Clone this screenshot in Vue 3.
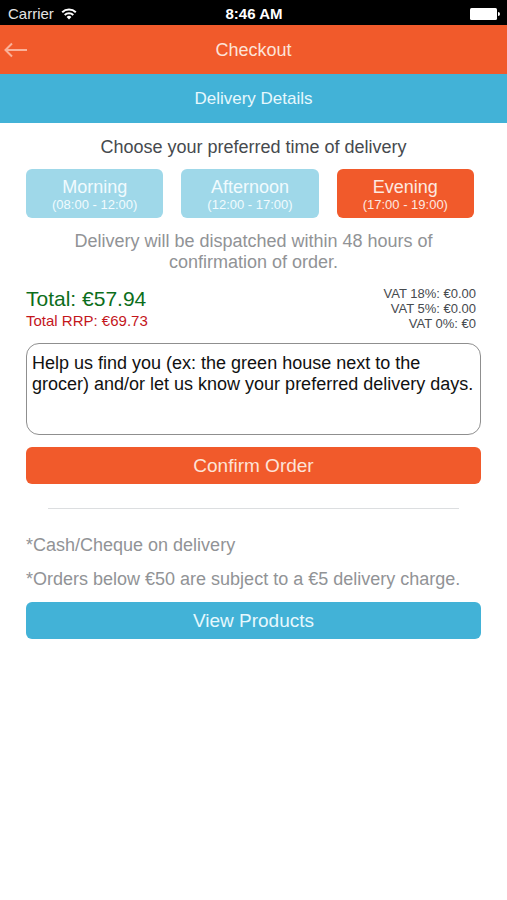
<script setup>
import { ref } from 'vue'

const slots = [
  { name: 'Morning', hours: '(08:00 - 12:00)' },
  { name: 'Afternoon', hours: '(12:00 - 17:00)' },
  { name: 'Evening', hours: '(17:00 - 19:00)' },
]
const selected = ref('Evening')
const vat = ['VAT 18%: €0.00', 'VAT 5%: €0.00', 'VAT 0%: €0']
const notes = ref(
  'Help us find you (ex: the green house next to the grocer) and/or let us know your preferred delivery days.'
)
</script>

<template>
  <div class="screen">
    <div class="status">
      <div class="carrier">
        <span>Carrier</span>
        <svg class="wifi" width="16" height="12" viewBox="0 0 16 12" aria-hidden="true">
          <path d="M1.2 4.3a9.8 9.8 0 0 1 13.6 0" />
          <path d="M3.7 7a6.2 6.2 0 0 1 8.6 0" />
          <path class="dot" d="M8 11.5 5.6 9a3.4 3.4 0 0 1 4.8 0z" />
        </svg>
      </div>
      <span class="clock">8:46 AM</span>
      <svg class="battery" width="30" height="12" viewBox="0 0 30 12" aria-hidden="true">
        <rect x="0" y="0" width="27" height="12" rx="1.5" />
        <path d="M28 4a2 2 0 0 1 0 4z" />
      </svg>
    </div>

    <header class="navbar">
      <button class="back" type="button" aria-label="Back">
        <svg width="24" height="16" viewBox="0 0 24 16" aria-hidden="true">
          <path d="M8 1.5 1.5 8 8 14.5M1.5 8H23" />
        </svg>
      </button>
      <h1>Checkout</h1>
    </header>
    <h2 class="section">Delivery Details</h2>

    <main class="content">
      <p class="prompt">Choose your preferred time of delivery</p>

      <div class="slots">
        <button
          v-for="slot in slots"
          :key="slot.name"
          type="button"
          class="slot"
          :class="{ active: slot.name === selected }"
          :aria-pressed="slot.name === selected"
          @click="selected = slot.name"
        >
          <span class="name">{{ slot.name }}</span>
          <span class="hours">{{ slot.hours }}</span>
        </button>
      </div>

      <p class="dispatch">Delivery will be dispatched within 48 hours of confirmation of order.</p>

      <div class="summary">
        <div>
          <p class="total">Total: €57.94</p>
          <p class="rrp">Total RRP: €69.73</p>
        </div>
        <div class="vat">
          <p v-for="line in vat" :key="line">{{ line }}</p>
        </div>
      </div>

      <textarea v-model="notes" class="notes" aria-label="Delivery notes"></textarea>
      <button type="button" class="action confirm">Confirm Order</button>

      <hr />

      <p class="note">*Cash/Cheque on delivery</p>
      <p class="note">*Orders below €50 are subject to a €5 delivery charge.</p>
      <button type="button" class="action products">View Products</button>
    </main>
  </div>
</template>

<style>
body {
  margin: 0;
  background: #fff;
}
</style>

<style scoped>
.screen {
  min-height: 100vh;
  background: #fff;
  font-family: "Liberation Sans", Arial, sans-serif;
  font-size: 18px;
  line-height: 20px;
  color: #464a4e;
}
h1,
h2,
p {
  margin: 0;
  font-weight: 400;
}
button,
textarea {
  font: inherit;
}
button {
  border: 0;
  cursor: pointer;
}
.status {
  display: grid;
  grid-template-columns: 1fr auto 1fr;
  align-items: center;
  height: 25px;
  padding: 2px 7px 0 8px;
  box-sizing: border-box;
  background: #000;
  color: #fff;
  font-size: 15px;
}
.carrier {
  display: flex;
  align-items: center;
  gap: 7px;
  color: #e4e4e4;
}
.wifi {
  fill: none;
  stroke: #fff;
  stroke-width: 2;
}
.wifi .dot {
  fill: #fff;
  stroke: none;
}
.clock {
  font-weight: 700;
}
.battery {
  justify-self: end;
  fill: #fff;
}
.navbar {
  display: grid;
  grid-template-columns: 1fr auto 1fr;
  align-items: center;
  height: 49px;
  background: #f15a2b;
  color: #fde3d8;
}
.navbar h1 {
  font-size: 18px;
}
.back {
  display: flex;
  justify-self: start;
  padding: 0 4px;
  background: none;
}
.back svg {
  fill: none;
  stroke: #fab199;
  stroke-width: 2;
}
.section {
  background: #42b2d7;
  color: #e6f8fd;
  font-size: 17px;
  line-height: 49px;
  text-align: center;
}
.content {
  display: flex;
  flex-direction: column;
  padding: 14px 26px;
}
.prompt {
  text-align: center;
}
.slots {
  display: grid;
  grid-template-columns: repeat(3, 1fr);
  gap: 18px;
  margin: 12px 7px 0 0;
}
.slot {
  display: flex;
  flex-direction: column;
  align-items: center;
  padding: 8px 0 5px;
  border-radius: 6px;
  background: #9fd8e9;
  color: #f1fbfe;
}
.slot.active {
  background: #f15a2b;
  color: #fde9e0;
}
.slot .hours {
  font-size: 13px;
  line-height: 16px;
}
.dispatch {
  margin: 13px 40px 0;
  color: #919396;
  line-height: 21px;
  text-align: center;
}
.summary {
  display: flex;
  justify-content: space-between;
  margin: 13px 5px 0 0;
}
.total {
  color: #0c6e1b;
  font-size: 21px;
  line-height: 25px;
}
.rrp {
  color: #c4161c;
  font-size: 15px;
}
.vat {
  font-size: 13px;
  line-height: 15px;
  text-align: right;
}
.notes {
  display: block;
  height: 92px;
  margin: 12px 0;
  padding: 9px 3px 9px 5px;
  box-sizing: border-box;
  border: 1px solid #8f8f8f;
  border-radius: 13px;
  outline: 0;
  background: #fff;
  color: #111;
  line-height: 21px;
  resize: none;
}
.action {
  padding: 0;
  border-radius: 6px;
  font-size: 19px;
  line-height: 37px;
}
.confirm {
  background: #f15a2b;
  color: #fde3d8;
}
.products {
  background: #42b2d7;
  color: #e6f8fd;
}
hr {
  align-self: stretch;
  height: 1px;
  margin: 24px 22px 26px;
  border: 0;
  background: #dcdee0;
}
.note {
  margin-bottom: 14px;
  color: #919396;
}
.note + .action {
  margin-top: -1px;
}
</style>
